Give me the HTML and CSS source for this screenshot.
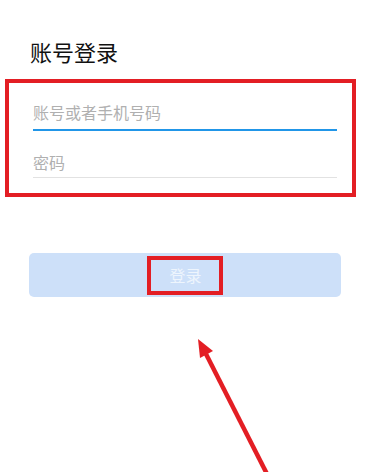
FILE: index.html
```html
<!DOCTYPE html>
<html lang="zh-CN">
<head>
    <meta charset="UTF-8">
    <meta name="viewport" content="width=device-width, initial-scale=1.0">
    <title>账号登录</title>
    <link rel="stylesheet" href="styles.css">
</head>
<body>

    <div class="page">
        <h1 class="title">账号登录</h1>

        <!-- 输入区域 -->
        <form class="login-form" id="loginForm">
            <div class="mark-box">
                <input type="text" class="field field-active" placeholder="账号或者手机号码">
                <input type="password" class="field" placeholder="密码">
            </div>
            <button type="submit" class="login-btn" disabled><span class="mark-text">登录</span></button>
        </form>

        <!-- 标注箭头 -->
        <svg class="arrow" width="376" height="472" viewBox="0 0 376 472">
            <line x1="267" y1="474" x2="206" y2="354" stroke="#e31e24" stroke-width="4.5"/>
            <polygon points="198,339 213,351 200,358" fill="#e31e24"/>
        </svg>
    </div>

</body>
</html>
```

FILE: styles.css
```css
body {
    margin: 0;
    padding: 0;
    background-color: #fff;
    font-family: "Noto Sans CJK SC", "Noto Sans", sans-serif;
}
.page {
    position: relative;
    width: 376px;
    height: 472px;
    overflow: hidden;
}
.title {
    margin: 0;
    padding: 36px 0 0 30px;
    font-size: 22px;
    font-weight: normal;
    line-height: 30px;
    color: #111;
}
.login-form {
    margin-top: 13px;
}
.mark-box {
    width: 351px;
    margin-left: 5px;
    padding: 16px 15px 15px 24px;
    border: 4px solid #e31e24;
    display: flex;
    flex-direction: column;
    gap: 17px;
    box-sizing: border-box;
}
.field {
    display: block;
    width: 100%;
    height: 29px;
    padding: 0;
    margin: 0;
    border: none;
    border-bottom: 1px solid #e2e2e2;
    outline: none;
    font-family: inherit;
    font-size: 16px;
    line-height: 29px;
    color: #333;
    background: transparent;
}
.field::placeholder {
    color: #b0b0b0;
}
.field-active {
    height: 27px;
    padding-bottom: 3px;
    line-height: 27px;
    border-bottom: 2px solid #2196e8;
}
.login-btn {
    display: flex;
    justify-content: center;
    align-items: center;
    width: 312px;
    height: 44px;
    margin: 56px 0 0 29px;
    padding: 0;
    border: none;
    border-radius: 5px;
    background-color: #cde0f9;
    font-family: inherit;
    font-size: 16px;
    color: #eef5fd;
}
.mark-text {
    display: block;
    padding: 0 17px 0 18px;
    height: 31px;
    line-height: 31px;
    border: 4px solid #e31e24;
}
.arrow {
    position: absolute;
    top: 0;
    left: 0;
    pointer-events: none;
}
```
